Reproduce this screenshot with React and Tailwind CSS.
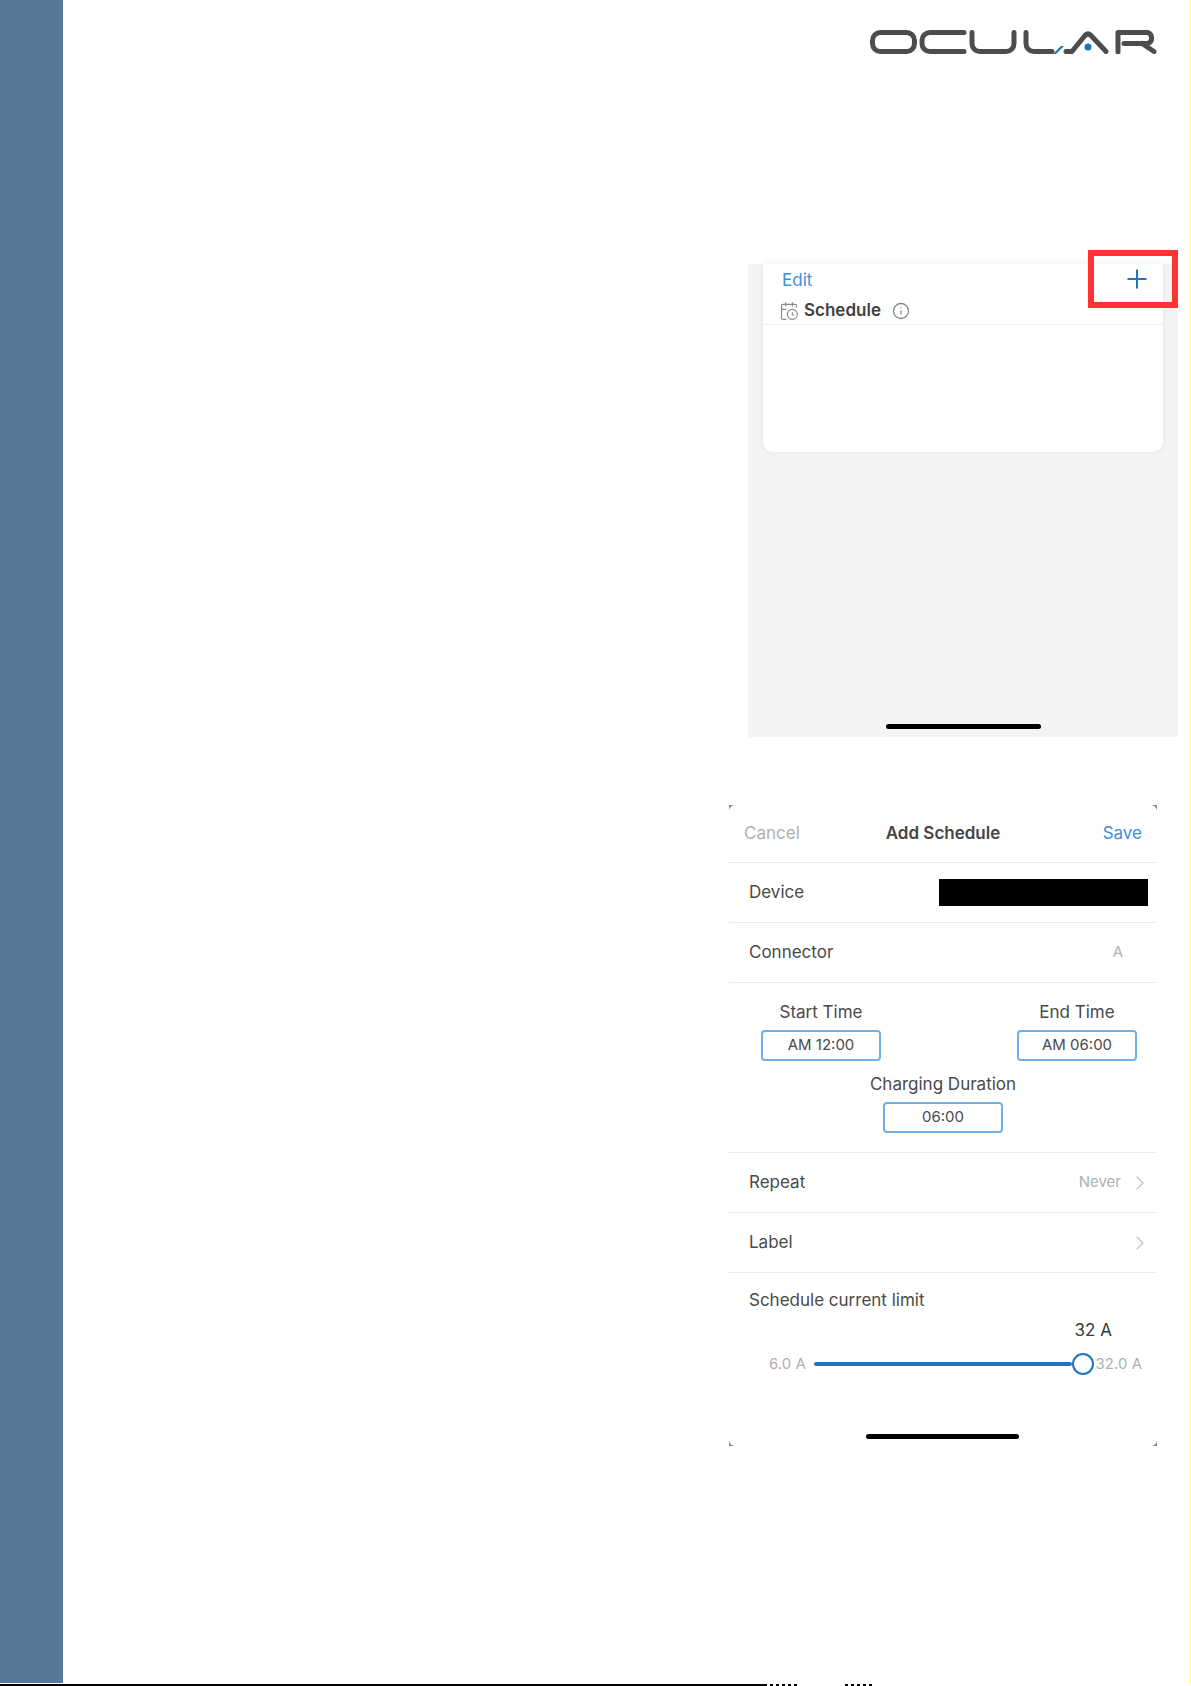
import { Plus, ChevronRight, CalendarClock, Info } from 'lucide-react';

function Row({ label, value, chevron }) {
  return (
    <div className="flex h-[60px] items-center justify-between border-b border-[#ececec] pl-5 pr-[5px]">
      <span className="text-[17px] text-[#4a4a4a]">{label}</span>
      <span className="flex items-center gap-[7px] text-[15px] text-[#b0b0b0]">
        {value}
        {chevron && <ChevronRight size={24} strokeWidth={1.1} className="text-[#bdbdbd]" />}
      </span>
    </div>
  );
}

function TimeBox({ label, value }) {
  return (
    <div className="flex w-[120px] flex-col items-center">
      <span className="whitespace-nowrap text-[17px] leading-[26px] text-[#4a4a4a]">{label}</span>
      <div className="mt-[5px] flex h-[31px] w-[120px] items-center justify-center rounded-[4px] border-2 border-[#6fb0e6] text-[15px] text-[#4a4a4a]">
        {value}
      </div>
    </div>
  );
}

function Logo() {
  return (
    <svg width="288" height="24" viewBox="0 0 288 24" fill="none">
      <g stroke="#4d4d4f" strokeWidth="5" strokeLinecap="round" strokeLinejoin="round">
        <rect x="2.500" y="2.500" width="42" height="19" rx="8" />
        <path d="M94 2.500H60a8 8 0 0 0-8 8v3a8 8 0 0 0 8 8h34" />
        <path d="M102 2.500v11a8 8 0 0 0 8 8h26a8 8 0 0 0 8-8v-11" />
        <path d="M156 2.500v11a8 8 0 0 0 8 8h18" />
        <path d="M196 21.500h6l13-16q3-3 6 0l15 16" />
        <path d="M248 22V2.500h30a6 6 0 0 1 0 11h-24M272 13.500l12 8" />
      </g>
      <path d="M183 24l8-8h3l-8 8z" fill="#1b75bc" />
      <circle cx="218" cy="17" r="3.500" fill="#1b75bc" />
    </svg>
  );
}

function Corner({ className }) {
  return (
    <svg width="6" height="6" viewBox="0 0 6 6" className={className}>
      <path d="M0 0v6h6C3 6 0 3 0 0z" fill="#8a8a8a" />
    </svg>
  );
}

export default function App() {
  return (
    <div className="flex h-[1686px] w-[1191px] flex-col bg-white font-['Inter','Liberation_Sans',Arial,sans-serif]">
      <div className="flex flex-1">
        <aside className="mb-px w-[63px] shrink-0 bg-[#587a98]" />

        <main className="flex flex-1 flex-col items-end">
          <div className="mr-[32px] mt-[30px]">
            <Logo />
          </div>

          <section className="relative mr-[12px] mt-[210px] h-[473px] w-[430px] bg-[#f4f4f4]">
            <div className="mx-[15px] h-[188px] rounded-b-[10px] bg-white shadow-[0_0_6px_rgba(0,0,0,0.07)]">
              <div className="flex h-[31px] items-center pl-[19px] pt-[2px] text-[17px] text-[#3d8fd6]">Edit</div>
              <div className="flex h-[30px] items-center gap-[5px] border-b border-[#efefef] pl-4 pt-[3px]">
                <CalendarClock size={20} strokeWidth={1.4} className="text-[#8a8a8a]" />
                <span className="text-[17px] font-semibold text-[#3f3f3f]">Schedule</span>
                <Info size={18} strokeWidth={1.75} className="ml-[6px] text-[#8a8a8a]" />
              </div>
            </div>
            <div className="absolute -top-[14px] right-0 flex h-[58px] w-[90px] items-center justify-center border-[6px] border-[#ff3333] pl-2">
              <Plus size={30} strokeWidth={1.6} className="text-[#1f74c4]" />
            </div>
            <div className="absolute bottom-[8px] left-[138px] h-[5px] w-[155px] rounded-full bg-black" />
          </section>

          <section className="relative mr-[33px] mt-[68px] h-[641px] w-[428px]">
            <Corner className="absolute left-0 top-0 rotate-90" />
            <Corner className="absolute right-0 top-0 rotate-180" />
            <Corner className="absolute bottom-0 left-0" />
            <Corner className="absolute bottom-0 right-0 -rotate-90" />

            <div className="flex h-[58px] items-center justify-between border-b border-[#e8e8e8] px-[15px]">
              <span className="w-[70px] text-[17px] text-[#b0b0b0]">Cancel</span>
              <span className="text-[17px] font-semibold text-[#454545]">Add Schedule</span>
              <span className="w-[70px] text-right text-[17px] text-[#3d8fd6]">Save</span>
            </div>
            <div className="flex h-[60px] items-center justify-between border-b border-[#ececec] pl-5 pr-[9px]">
              <span className="text-[17px] text-[#4a4a4a]">Device</span>
              <div className="h-[27px] w-[209px] bg-black" />
            </div>
            <Row label="Connector" value={<span className="mr-[29px]">A</span>} />

            <div className="h-[170px] border-b border-[#ececec] pt-[16px]">
              <div className="flex justify-between pl-[32px] pr-[20px]">
                <TimeBox label="Start Time" value="AM 12:00" />
                <TimeBox label="End Time" value="AM 06:00" />
              </div>
              <div className="mt-[10px] flex justify-center">
                <TimeBox label="Charging Duration" value="06:00" />
              </div>
            </div>

            <Row label="Repeat" value="Never" chevron />
            <Row label="Label" chevron />

            <div className="pl-5 pr-[15px] pt-[14px]">
              <div className="text-[17px] leading-[26px] text-[#4a4a4a]">Schedule current limit</div>
              <div className="mt-[4px] pr-[30px] text-right text-[17px] leading-[26px] text-[#3a3a3a]">32 A</div>
              <div className="mt-[10px] flex items-center pl-5">
                <span className="w-[45px] whitespace-nowrap text-[15px] text-[#b0b0b0]">6.0 A</span>
                <div className="h-1 w-[261px] rounded-full bg-[#1f74c4]" />
                <div className="h-[22px] w-[22px] shrink-0 rounded-full border-2 border-[#1f74c4] bg-white" />
                <span className="ml-[2px] whitespace-nowrap text-[15px] text-[#b0b0b0]">32.0 A</span>
              </div>
            </div>

            <div className="absolute bottom-[7px] left-[137px] h-[5px] w-[153px] rounded-full bg-black" />
          </section>
        </main>

        <div className="w-px shrink-0 bg-[#ffff70]" />
      </div>

      <div className="flex h-[2px]">
        <div className="w-[767px] bg-black" />
        <div className="ml-[3px] w-[30px] bg-[repeating-linear-gradient(90deg,#000_0,#000_3px,#fff_3px,#fff_6px)]" />
        <div className="ml-[45px] w-[27px] bg-[repeating-linear-gradient(90deg,#000_0,#000_3px,#fff_3px,#fff_6px)]" />
      </div>
    </div>
  );
}
